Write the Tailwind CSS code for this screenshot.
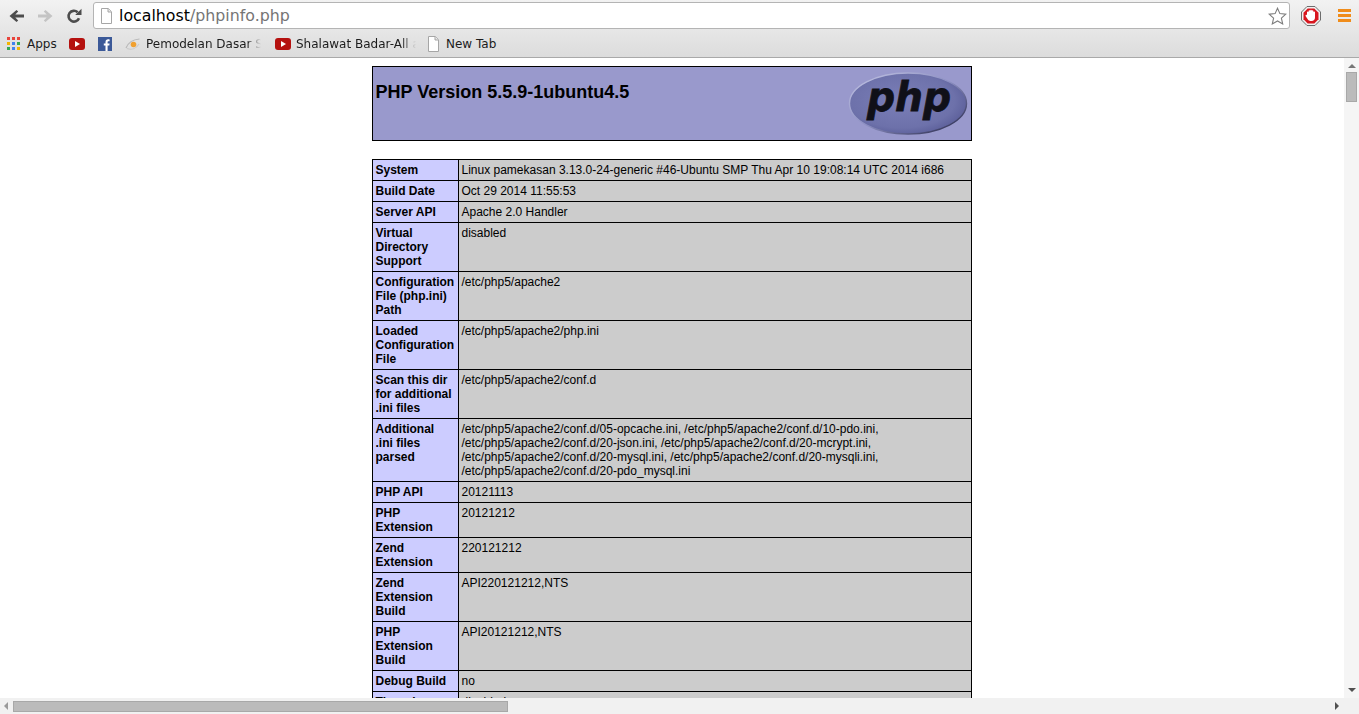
<!DOCTYPE html>
<html lang="en">
  <head>
    <meta charset="UTF-8" />
    <title>phpinfo()</title>
    <script src="https://cdn.jsdelivr.net/npm/@tailwindcss/browser@4"></script>
  </head>

  <body class="w-[1359px] h-[714px] overflow-hidden flex flex-col bg-white font-['Liberation_Sans',sans-serif]">
    <!-- Browser toolbar -->
    <header class="h-[58px] shrink-0 flex flex-col border-b border-[#a9a9a9] bg-gradient-to-b from-[#f2f2f2] to-[#dcdcdc] font-['DejaVu_Sans',sans-serif]">
      <div class="h-[30px] flex items-center pl-[8px] pt-[1px]">
        <button class="w-[17px] h-[16px]">
          <svg viewBox="0 0 17 16" class="w-[17px] h-[16px]"><path d="M16 6.500H7.300l2.900-2.900-1.700-1.700L1.500 8l7 6.100 1.700-1.700-2.900-2.900H16z" fill="#4d4d4d"/></svg>
        </button>
        <button class="w-[17px] h-[16px] ml-[12px]">
          <svg viewBox="0 0 17 16" class="w-[17px] h-[16px]"><path d="M1 6.500h8.700L6.800 3.600l1.700-1.700 7 6.100-7 6.100-1.700-1.700 2.900-2.900H1z" fill="#c4c4c4"/></svg>
        </button>
        <button class="w-[16px] h-[16px] ml-[12px]">
          <svg viewBox="0 0 16 16" class="w-[16px] h-[16px]"><path d="M13 10.200A5.400 5.400 0 1 1 11.600 4.200" fill="none" stroke="#4d4d4d" stroke-width="2.600"/><path d="M9.200 6.900h6.300V.7z" fill="#4d4d4d"/></svg>
        </button>
        <!-- Omnibox -->
        <div class="w-[1197px] h-[27px] ml-[11px] flex items-center bg-white border border-[#b4b4b4] rounded-[3px] pl-[6px] pr-[2px]">
          <svg viewBox="0 0 13 16" class="w-[13px] h-[16px] shrink-0"><path d="M1.500.5h6.800l3.200 3.200v11.800h-10z" fill="#fff" stroke="#a6a6a6"/><path d="M8 .8v3.200h3.200" fill="#e6e6e6" stroke="#a6a6a6"/></svg>
          <span class="ml-[6px] text-[15.800px] leading-[20px] text-black">localhost<span class="text-[#757575]">/phpinfo.php</span></span>
          <svg viewBox="0 0 19 18" class="w-[19px] h-[18px] ml-auto"><path d="M9.500 1.200l2.400 5.400 5.900.6-4.400 3.900 1.300 5.800-5.200-3-5.200 3 1.300-5.800-4.400-3.900 5.900-.6z" fill="#fff" stroke="#7d7d7d" stroke-width="1.100"/></svg>
        </div>
        <svg viewBox="0 0 20 20" class="w-[20px] h-[20px] ml-[11px]">
          <path d="M6 .5h8L19.500 6v8L14 19.500H6L.5 14V6z" fill="#f2f2f2" stroke="#6d6d6d" stroke-width="1"/>
          <path d="M6.700 2.500h6.600l4.200 4.200v6.600l-4.200 4.200H6.700l-4.200-4.200V6.700z" fill="#d8161e"/>
          <path d="M6 8V6.200a.8.800 0 0 1 1.600 0V5a.8.800 0 0 1 1.600 0v-.5a.8.800 0 0 1 1.600 0V5a.8.800 0 0 1 1.600 0v1.200a.8.800 0 0 1 1.600 0v5.300c0 2-1.300 3.500-3.500 3.500H9.500c-1.300 0-2.100-.6-2.800-1.700L4.700 10.300c-.6-1 .6-2 1.300-1.100z" fill="#fff"/>
        </svg>
        <div class="w-[13px] ml-[17px] flex flex-col gap-[2px]">
          <div class="h-[3px] bg-[#f08c1a]"></div>
          <div class="h-[3px] bg-[#f08c1a]"></div>
          <div class="h-[3px] bg-[#f08c1a]"></div>
        </div>
      </div>

      <!-- Bookmarks bar -->
      <nav class="flex-1 flex items-center text-[12px] leading-[16px] text-[#1c1c1c] pl-[7px]">
        <svg viewBox="0 0 13 13" class="w-[13px] h-[13px] shrink-0">
          <rect x="0" y="0" width="3" height="3" fill="#e8453c"/><rect x="5" y="0" width="3" height="3" fill="#e8453c"/><rect x="10" y="0" width="3" height="3" fill="#e8453c"/>
          <rect x="0" y="5" width="3" height="3" fill="#f4b400"/><rect x="5" y="5" width="3" height="3" fill="#3f82f0"/><rect x="10" y="5" width="3" height="3" fill="#34a853"/>
          <rect x="0" y="10" width="3" height="3" fill="#34a853"/><rect x="5" y="10" width="3" height="3" fill="#3f82f0"/><rect x="10" y="10" width="3" height="3" fill="#f4b400"/>
        </svg>
        <span class="ml-[7px] w-[30px]">Apps</span>
        <svg viewBox="0 0 16 12" class="w-[16px] h-[12px] ml-[12px] shrink-0"><rect width="16" height="12" rx="3" fill="#b5110f"/><path d="M6 3l5 3-5 3z" fill="#fff"/></svg>
        <svg viewBox="0 0 14 14" class="w-[14px] h-[14px] ml-[13px] shrink-0"><rect width="14" height="14" fill="#3b5998"/><path d="M9.600 14V8.600h1.700l.3-2.100h-2V5.200c0-.6.2-1 1-1h1V2.400c-.2 0-.8-.1-1.500-.1-1.500 0-2.600.9-2.600 2.600v1.600H5.800v2.100h1.700V14z" fill="#fff"/></svg>
        <svg viewBox="0 0 16 14" class="w-[16px] h-[14px] ml-[13px] shrink-0"><path d="M1 11C3 6 8 2.500 14.500 2" fill="none" stroke="#b8b8b8" stroke-width="1.200"/><path d="M2 11.500c4 1.500 9 .5 12-4.500" fill="none" stroke="#c9c9c9" stroke-width="1.200"/><circle cx="8.500" cy="7.500" r="2.800" fill="#f0a030"/></svg>
        <span class="ml-[5px] w-[115px] overflow-hidden whitespace-nowrap [mask-image:linear-gradient(to_right,black_88%,transparent)]">Pemodelan Dasar Sistem</span>
        <svg viewBox="0 0 16 12" class="w-[16px] h-[12px] ml-[14px] shrink-0"><rect width="16" height="12" rx="3" fill="#b5110f"/><path d="M6 3l5 3-5 3z" fill="#fff"/></svg>
        <span class="ml-[5px] w-[120px] overflow-hidden whitespace-pre [mask-image:linear-gradient(to_right,black_88%,transparent)]">Shalawat Badar-All artis</span>
        <svg viewBox="0 0 13 16" class="w-[13px] h-[16px] ml-[11px] shrink-0"><path d="M1.500.5h6.800l3.200 3.200v11.800h-10z" fill="#fff" stroke="#a6a6a6"/><path d="M8 .8v3.200h3.200" fill="#e6e6e6" stroke="#a6a6a6"/></svg>
        <span class="ml-[6px]">New Tab</span>
      </nav>
    </header>

    <div class="flex-1 min-h-0 flex">
      <!-- Page -->
      <main class="flex-1 min-w-0 overflow-hidden pt-[8px] text-[12px] leading-[14px] text-black">
        <div class="w-[600px] h-[75px] mx-auto flex justify-between border border-black bg-[#9999cc] pl-[2.500px] pr-[3px] pt-[15px]">
          <h1 class="text-[18px] leading-[21px] font-bold">PHP Version 5.5.9-1ubuntu4.5</h1>
          <svg viewBox="0 0 120 64" class="w-[120px] h-[64px] -mt-[10px]">
            <defs>
              <radialGradient id="phpOval" cx="45%" cy="45%" r="60%">
                <stop offset="0" stop-color="#7b7fb8"/>
                <stop offset="0.75" stop-color="#6d71aa"/>
                <stop offset="1" stop-color="#5a5d98"/>
              </radialGradient>
              <linearGradient id="phpRim" x1="0" y1="0" x2="1" y2="1">
                <stop offset="0" stop-color="#c4c6e4"/>
                <stop offset="0.5" stop-color="#8c8fc2"/>
                <stop offset="1" stop-color="#1f2040"/>
              </linearGradient>
            </defs>
            <ellipse cx="60" cy="31.500" rx="58.500" ry="30.500" fill="url(#phpOval)" stroke="url(#phpRim)" stroke-width="1.400"/>
            <text x="19" y="39" font-family="DejaVu Sans" font-weight="700" font-style="italic" font-size="41" textLength="84" lengthAdjust="spacingAndGlyphs" fill="#101018" stroke="#101018" stroke-width="0.800">php</text>
          </svg>
        </div>

        <table class="w-[600px] mx-auto mt-[18px] table-fixed border-collapse">
          <colgroup>
            <col class="w-[86px]" />
            <col />
          </colgroup>
          <tbody>
            <tr><td class="border border-black bg-[#ccccff] pl-[2.500px] pr-[3.500px] py-[3px] align-top font-bold">System</td><td class="border border-black bg-[#cccccc] pl-[2.500px] pr-[3px] py-[3px] align-top">Linux pamekasan 3.13.0-24-generic #46-Ubuntu SMP Thu Apr 10 19:08:14 UTC 2014 i686</td></tr>
            <tr><td class="border border-black bg-[#ccccff] pl-[2.500px] pr-[3.500px] py-[3px] align-top font-bold">Build Date</td><td class="border border-black bg-[#cccccc] pl-[2.500px] pr-[3px] py-[3px] align-top">Oct 29 2014 11:55:53</td></tr>
            <tr><td class="border border-black bg-[#ccccff] pl-[2.500px] pr-[3.500px] py-[3px] align-top font-bold">Server API</td><td class="border border-black bg-[#cccccc] pl-[2.500px] pr-[3px] py-[3px] align-top">Apache 2.0 Handler</td></tr>
            <tr><td class="border border-black bg-[#ccccff] pl-[2.500px] pr-[3.500px] py-[3px] align-top font-bold">Virtual Directory Support</td><td class="border border-black bg-[#cccccc] pl-[2.500px] pr-[3px] py-[3px] align-top">disabled</td></tr>
            <tr><td class="border border-black bg-[#ccccff] pl-[2.500px] pr-[3.500px] py-[3px] align-top font-bold">Configuration File (php.ini) Path</td><td class="border border-black bg-[#cccccc] pl-[2.500px] pr-[3px] py-[3px] align-top">/etc/php5/apache2</td></tr>
            <tr><td class="border border-black bg-[#ccccff] pl-[2.500px] pr-[3.500px] py-[3px] align-top font-bold">Loaded Configuration File</td><td class="border border-black bg-[#cccccc] pl-[2.500px] pr-[3px] py-[3px] align-top">/etc/php5/apache2/php.ini</td></tr>
            <tr><td class="border border-black bg-[#ccccff] pl-[2.500px] pr-[3.500px] py-[3px] align-top font-bold">Scan this dir for additional .ini files</td><td class="border border-black bg-[#cccccc] pl-[2.500px] pr-[3px] py-[3px] align-top">/etc/php5/apache2/conf.d</td></tr>
            <tr><td class="border border-black bg-[#ccccff] pl-[2.500px] pr-[3.500px] py-[3px] align-top font-bold">Additional .ini files parsed</td><td class="border border-black bg-[#cccccc] pl-[2.500px] pr-[3px] py-[3px] align-top">/etc/php5/apache2/conf.d/05-opcache.ini, /etc/php5/apache2/conf.d/10-pdo.ini, /etc/php5/apache2/conf.d/20-json.ini, /etc/php5/apache2/conf.d/20-mcrypt.ini, /etc/php5/apache2/conf.d/20-mysql.ini, /etc/php5/apache2/conf.d/20-mysqli.ini, /etc/php5/apache2/conf.d/20-pdo_mysql.ini</td></tr>
            <tr><td class="border border-black bg-[#ccccff] pl-[2.500px] pr-[3.500px] py-[3px] align-top font-bold">PHP API</td><td class="border border-black bg-[#cccccc] pl-[2.500px] pr-[3px] py-[3px] align-top">20121113</td></tr>
            <tr><td class="border border-black bg-[#ccccff] pl-[2.500px] pr-[3.500px] py-[3px] align-top font-bold">PHP Extension</td><td class="border border-black bg-[#cccccc] pl-[2.500px] pr-[3px] py-[3px] align-top">20121212</td></tr>
            <tr><td class="border border-black bg-[#ccccff] pl-[2.500px] pr-[3.500px] py-[3px] align-top font-bold">Zend Extension</td><td class="border border-black bg-[#cccccc] pl-[2.500px] pr-[3px] py-[3px] align-top">220121212</td></tr>
            <tr><td class="border border-black bg-[#ccccff] pl-[2.500px] pr-[3.500px] py-[3px] align-top font-bold">Zend Extension Build</td><td class="border border-black bg-[#cccccc] pl-[2.500px] pr-[3px] py-[3px] align-top">API220121212,NTS</td></tr>
            <tr><td class="border border-black bg-[#ccccff] pl-[2.500px] pr-[3.500px] py-[3px] align-top font-bold">PHP Extension Build</td><td class="border border-black bg-[#cccccc] pl-[2.500px] pr-[3px] py-[3px] align-top">API20121212,NTS</td></tr>
            <tr><td class="border border-black bg-[#ccccff] pl-[2.500px] pr-[3.500px] py-[3px] align-top font-bold">Debug Build</td><td class="border border-black bg-[#cccccc] pl-[2.500px] pr-[3px] py-[3px] align-top">no</td></tr>
            <tr><td class="border border-black bg-[#ccccff] pl-[2.500px] pr-[3.500px] py-[3px] align-top font-bold">Thread Safety</td><td class="border border-black bg-[#cccccc] pl-[2.500px] pr-[3px] py-[3px] align-top">disabled</td></tr>
          </tbody>
        </table>
      </main>

      <!-- Vertical scrollbar -->
      <div class="w-[15px] shrink-0 flex flex-col items-center bg-[#f5f5f5] pt-[6px]">
        <div class="w-0 h-0 border-x-[4px] border-x-transparent border-b-[4px] border-b-[#777777]"></div>
        <div class="w-[11px] h-[30px] mt-[4px] bg-[#bbbbbb] border border-[#a8a8a8]"></div>
        <div class="w-0 h-0 mt-auto mb-[6px] border-x-[4px] border-x-transparent border-t-[4px] border-t-[#505050]"></div>
      </div>
    </div>

    <!-- Horizontal scrollbar -->
    <div class="h-[16px] shrink-0 flex items-center bg-[#f1f1f1] pl-[4px] pr-[20px]">
      <div class="w-0 h-0 border-y-[4px] border-y-transparent border-r-[4px] border-r-[#9a9a9a]"></div>
      <div class="w-[495px] h-[11px] ml-[5px] bg-[#bbbbbb] border border-[#a8a8a8]"></div>
      <div class="w-0 h-0 ml-auto border-y-[4px] border-y-transparent border-l-[4px] border-l-[#505050]"></div>
    </div>
  </body>
</html>
